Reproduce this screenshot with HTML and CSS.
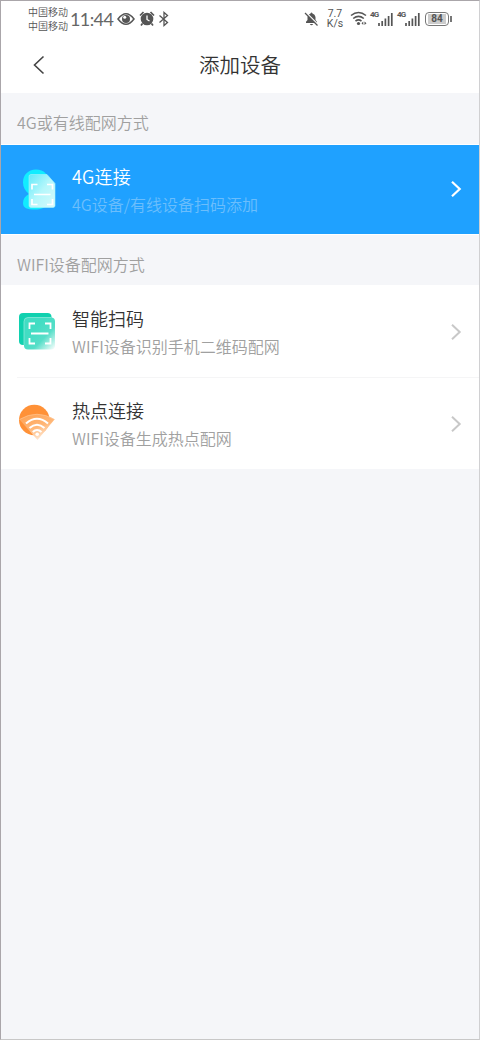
FILE: index.html
```html
<!DOCTYPE html>
<html lang="zh-CN">
<head>
<meta charset="utf-8">
<title>添加设备</title>
<link rel="stylesheet" href="styles.css">
</head>
<body>
<main class="phone">
  <div class="status">
    <div class="carriers"><span>中国移动</span><span>中国移动</span></div>
    <span class="clock">11:44</span>
    <svg class="eye" width="18" height="14" viewBox="0 0 18 14"><path d="M1 7Q9-3.500 17 7Q9 17.500 1 7Z" fill="none" stroke="#555" stroke-width="1.500"/><circle cx="9" cy="7" r="4" fill="#555"/><circle cx="7.700" cy="5.300" r="1.500" fill="#fff"/></svg>
    <svg class="alarm" width="16" height="16" viewBox="0 0 16 16"><circle cx="8" cy="8" r="6.300" fill="#555"/><path d="M1 4.500L4.500 1M15 4.500L11.500 1M3.500 12.500L2 14.500M12.500 12.500L14 14.500" stroke="#555" stroke-width="1.700"/><path d="M8 4.500V8.500L10.500 10" fill="none" stroke="#fff" stroke-width="1.300"/></svg>
    <svg class="bluetooth" width="12" height="16" viewBox="0 0 12 16"><path d="M1.500 4.500L9.500 11.500L6 14.500V1.500L9.500 4.500L1.500 11.500" fill="none" stroke="#555" stroke-width="1.300"/></svg>
    <svg class="mute" width="15" height="16" viewBox="0 0 15 16"><path d="M2 12V10.800L3.500 9V6Q4 3 6.500 2.500Q7.500 .5 8.500 2.500Q11 3 11.500 6V9L13 10.800V12ZM5.800 13H9.200Q7.500 15.500 5.800 13Z" fill="#555"/><path d="M1.800 1.200L14 13.500" stroke="#fff" stroke-width="1.400"/><path d="M1 2L13.500 14.500" stroke="#555" stroke-width="1.300"/></svg>
    <div class="speed"><span>7.7</span><span>K/s</span></div>
    <svg class="wifi" width="18" height="15" viewBox="0 0 18 15"><path d="M1 4.500Q8.500-1.500 16 4.500M3.200 7.500Q8.500 3.200 13.800 7.500M5.500 10.200Q8.500 7.700 11.500 10.200" fill="none" stroke="#555" stroke-width="1.600"/><circle cx="8.500" cy="12.500" r="1.600" fill="#555"/><path d="M11.500 12.300L13.300 10.500V14ZM16.500 12.300L14.500 10.500V14Z" fill="#555"/></svg>
    <div class="signal"><span>4G</span><svg width="15" height="14" viewBox="0 0 15 14"><path d="M1 11V14M4.200 9V14M7.400 6.500V14M10.600 4V14M13.800 1V14" stroke="#555" stroke-width="1.700"/></svg></div>
    <div class="signal second"><span>4G</span><svg width="15" height="14" viewBox="0 0 15 14"><path d="M1 11V14M4.200 9V14M7.400 6.500V14M10.600 4V14M13.800 1V14" stroke="#555" stroke-width="1.700"/></svg></div>
    <div class="battery"><span>84</span></div><i class="battery-tip"></i>
  </div>
  <header class="nav">
    <svg class="back" width="12" height="20" viewBox="0 0 12 20"><path d="M10.500 1.500L1.500 10L10.500 18.500" fill="none" stroke="#444" stroke-width="1.600"/></svg>
    <h1>添加设备</h1>
  </header>

  <h2 class="section">4G或有线配网方式</h2>
  <a class="row active">
    <svg class="icon" width="40" height="44" viewBox="0 0 40 44">
      <defs><linearGradient id="sim" x1="0" y1="0" x2="1" y2="1"><stop offset="0" stop-color="#62e9fa"/><stop offset=".5" stop-color="#b5f7fb"/><stop offset="1" stop-color="#d5fafb"/></linearGradient></defs>
      <path d="M18 1.500C26 1.500 31 7 31 14C31 20 27 23 27 26C34 34 29 41.500 17 41.500C9 41.500 5 40 5 35C5 31 7 28 11 26C7 23 5 19 5 14.500C5 7 10 1.500 18 1.500Z" fill="#12ecff"/>
      <path d="M13 6.500H29L37 15.500V37.500Q37 39.500 35 39.500H13Q11 39.500 11 37.500V8.500Q11 6.500 13 6.500Z" fill="url(#sim)" stroke="#a7f5fc" stroke-width=".6"/>
      <path d="M14 21.500V16.500H19.500M29 16.500H34.500V21.500M34.500 31V36.500H29M19.500 36.500H14V31M16 26.500H32.500" fill="none" stroke="#fff" stroke-width="1.700"/>
    </svg>
    <div class="copy"><h3>4G连接</h3><p>4G设备/有线设备扫码添加</p></div>
    <svg class="chevron" width="12" height="18" viewBox="0 0 12 18"><path d="M2 1.800L9.700 9L2 16.200" fill="none" stroke="currentColor" stroke-width="2.200"/></svg>
  </a>
  <h2 class="section wifi-section">WIFI设备配网方式</h2>
  <a class="row">
    <svg class="icon" width="40" height="44" viewBox="0 0 40 44">
      <defs>
        <linearGradient id="scan" x1=".35" y1=".35" x2="1" y2="1"><stop offset="0" stop-color="#42ddc3"/><stop offset=".45" stop-color="#56dec8"/><stop offset="1" stop-color="#fff"/></linearGradient>
      </defs>
      <rect x="1" y="4" width="32.500" height="32" rx="4" fill="#10d1af"/>
      <rect x="6" y="8.500" width="31" height="32" rx="4" fill="url(#scan)"/>
      <path d="M6 36V12.500Q6 8.500 10 8.500H33" fill="none" stroke="#8be9d9" stroke-width=".8"/>
      <path d="M11.500 20V14.500H17M27 14.500H32.500V20M32.500 29V34.500H27M17 34.500H11.500V29M13 24.500H30.500" fill="none" stroke="#fff" stroke-width="1.800"/>
    </svg>
    <div class="copy"><h3>智能扫码</h3><p>WIFI设备识别手机二维码配网</p></div>
    <svg class="chevron" width="12" height="18" viewBox="0 0 12 18"><path d="M2 1.800L9.700 9L2 16.200" fill="none" stroke="currentColor" stroke-width="2"/></svg>
  </a>
  <a class="row last">
    <svg class="icon" width="40" height="44" viewBox="0 0 40 44">
      <defs><linearGradient id="fan" x1=".25" y1="0" x2=".75" y2="1"><stop offset="0" stop-color="#fea456"/><stop offset=".5" stop-color="#ffb778"/><stop offset="1" stop-color="#fff3e7"/></linearGradient></defs>
      <circle cx="16.300" cy="19" r="15.300" fill="#ff9137"/>
      <path d="M1.500 18.500Q19 8 36.500 18.500L19.500 39Z" fill="url(#fan)"/>
      <path d="M1.500 18.500Q19 8 36.500 18.500" fill="none" stroke="#ffc18c" stroke-width=".8"/>
      <path d="M8 22.500Q19 13 30 22.500M11.500 27Q19 20.500 26.500 27M14.800 31Q19 27 23.500 31" fill="none" stroke="#fff" stroke-width="2.100"/><circle cx="19.200" cy="33.200" r="1.800" fill="#fff"/>
    </svg>
    <div class="copy"><h3>热点连接</h3><p>WIFI设备生成热点配网</p></div>
    <svg class="chevron" width="12" height="18" viewBox="0 0 12 18"><path d="M2 1.800L9.700 9L2 16.200" fill="none" stroke="currentColor" stroke-width="2"/></svg>
  </a>
</main>
</body>
</html>
```
FILE: styles.css
```css
* { box-sizing: border-box; }
body { margin: 0; }
h1, h2, h3, p { margin: 0; font-weight: 350; white-space: nowrap; }
.phone {
  width: 480px;
  height: 1040px;
  overflow: hidden;
  background: #f5f6f9;
  border: 1px solid #aaa6aa;
  border-right-color: #d0d0d2;
  border-bottom-color: #c8c8c8;
  font-family: "Noto Sans CJK SC", sans-serif;
  font-weight: 350;
}
.status {
  height: 35px;
  display: flex;
  align-items: center;
  padding-left: 27px;
  background: #fff;
  color: #555;
}
.status svg { flex: none; }
.carriers { width: 42px; font-size: 10px; line-height: 14px; color: #555; }
.carriers span { display: block; }
.clock { width: 47px; font: 400 18px/24px Lato, sans-serif; letter-spacing: -.6px; color: #666; }
.alarm { margin-left: 4px; }
.bluetooth { margin-left: 3px; }
.mute { margin-left: 134px; }
.speed { width: 18px; margin-left: 7px; font: 400 10.5px/9.5px Roboto, sans-serif; text-align: center; }
.speed span { display: block; }
.wifi { margin-left: 6px; }
.signal { display: flex; margin-left: 2px; height: 14px; }
.signal span { width: 8px; font: 700 8px/8px Roboto, sans-serif; letter-spacing: -.8px; margin-top: -1px; }
.signal.second { margin-left: 4px; }
.battery { width: 24px; height: 14px; margin-left: 5px; padding: 1px 2px; border: 1.5px solid #777; border-radius: 4px; }
.battery span { display: block; height: 10px; background: #ccc; font: 700 10px/10px Roboto, sans-serif; text-align: center; color: #555; }
.battery-tip { width: 2px; height: 6px; margin-left: 1px; background: #777; }
.nav {
  height: 57px;
  display: grid;
  grid-template-columns: 80px 1fr 80px;
  align-items: center;
  background: #fff;
}
.back { margin-left: 32px; }
.nav h1 { font-size: 20.5px; line-height: 30px; padding-bottom: 2px; text-align: center; color: #333; }
.section {
  height: 52px;
  padding: 17px 0 0 16px;
  font-size: 16px;
  line-height: 24px;
  color: #a0a0a0;
  border-bottom: 1px solid #fff;
}
.wifi-section { border-top: 1px solid #fff; }
.row {
  height: 92px;
  display: flex;
  align-items: flex-start;
  background: #fff;
  color: #c8c8c8;
  position: relative;
}
.row.last { height: 91px; }
.row:not(.active):not(.last)::after { content: ""; position: absolute; left: 16px; right: 0; bottom: 0; height: 1px; background: #f5f5f6; }
.row.active { height: 89px; background: #1fa1ff; color: #fff; }
.icon { flex: none; margin: 23px 0 0 17px; }
.copy { margin-left: 14px; padding-top: 18px; flex: 1; }
.copy h3 { font-size: 18px; line-height: 28px; color: #333; }
.copy p { font-size: 16px; line-height: 28px; color: #a0a0a0; }
.active .copy { padding-top: 17px; }
.active .copy h3 { color: #fff; letter-spacing: .2px; }
.active .copy p { color: #6bbefc; }
.chevron { flex: none; margin: 37px 17px 0 0; }
.active .chevron { margin-top: 35px; }
```
